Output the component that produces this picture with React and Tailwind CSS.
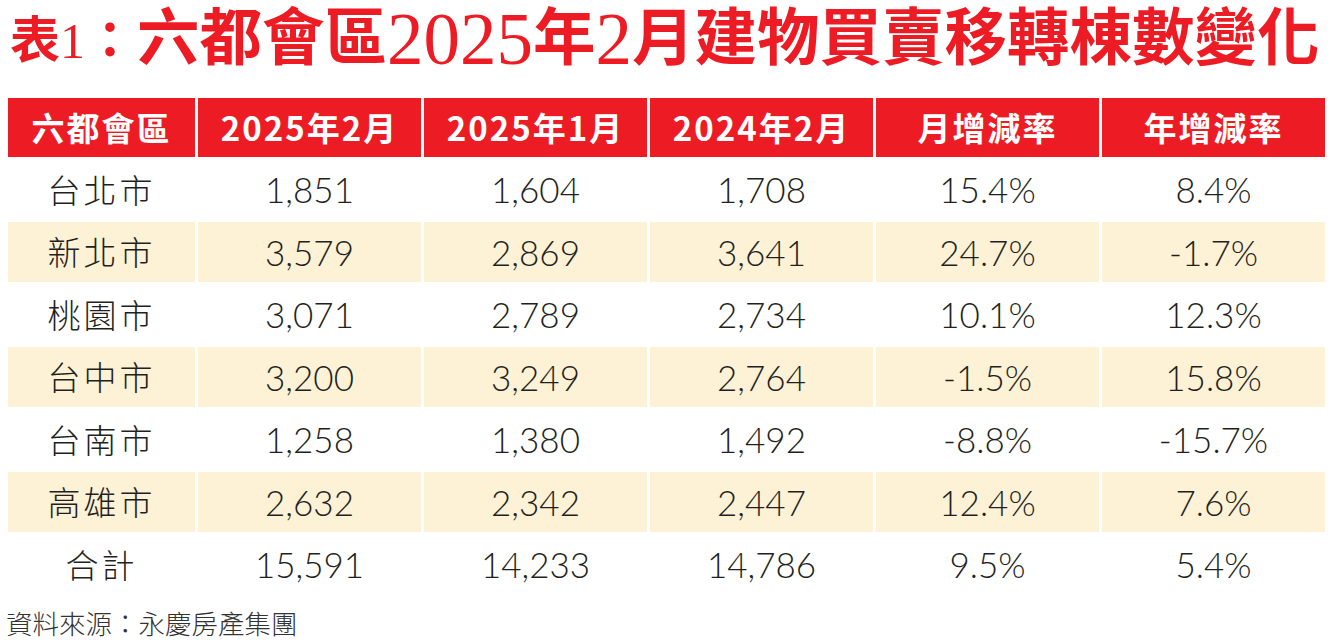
import React from "react";

const headers = ["六都會區", "2025年2月", "2025年1月", "2024年2月", "月增減率", "年增減率"];

const rows = [
  ["台北市", "1,851", "1,604", "1,708", "15.4%", "8.4%"],
  ["新北市", "3,579", "2,869", "3,641", "24.7%", "-1.7%"],
  ["桃園市", "3,071", "2,789", "2,734", "10.1%", "12.3%"],
  ["台中市", "3,200", "3,249", "2,764", "-1.5%", "15.8%"],
  ["台南市", "1,258", "1,380", "1,492", "-8.8%", "-15.7%"],
  ["高雄市", "2,632", "2,342", "2,447", "12.4%", "7.6%"],
  ["合計", "15,591", "14,233", "14,786", "9.5%", "5.4%"],
];

const Title = () => (
  <h1 className="h-[98px] pl-[10px] pb-[20px] flex items-center text-[#ed1c24] font-bold font-['Liberation_Serif','Noto_Sans_CJK_TC',serif] whitespace-nowrap leading-none">
    <span className="text-[50px] mt-[4px]">表<span className="font-normal">1</span>：</span>
    <span className="text-[62.5px] ml-[2px]">六都會區</span>
    <span className="text-[73px] font-normal">2025</span>
    <span className="text-[62.5px]">年</span>
    <span className="text-[73px] font-normal">2</span>
    <span className="text-[62.5px]">月建物買賣移轉棟數變化</span>
  </h1>
);

export default function App() {
  return (
    <div className="w-[1332px] h-[642px] bg-white overflow-hidden">
      <Title />
      <div className="mx-[8px] grid grid-cols-[187px_repeat(5,223px)] gap-x-[3px] gap-y-[2.5px]">
        {headers.map((h) => (
          <div
            key={h}
            className="h-[59px] bg-[#ed1c24] text-white flex items-center justify-center text-[33px] font-bold tracking-[2px] font-['Noto_Sans_CJK_TC',sans-serif]"
          >
            {h}
          </div>
        ))}
        {rows.map((r, i) => {
          const bg = i % 2 === 1 ? "bg-[#fdf1d6]" : "bg-white";
          return r.map((c, j) => (
            <div
              key={i + "-" + j}
              className={`${bg} h-[60px] flex items-center justify-center text-[#231f20] ${
                j === 0
                  ? "text-[33px] tracking-[3px] font-['Noto_Sans_CJK_TC',sans-serif] font-light"
                  : "text-[35px] font-['Lato','Noto_Sans_CJK_TC',sans-serif] font-light"
              }`}
            >
              {c}
            </div>
          ));
        })}
      </div>
      <p className="mt-[15px] pl-[6px] text-[26.5px] leading-none text-[#333] font-light font-['Noto_Sans_CJK_TC',sans-serif]">
        資料來源：永慶房產集團
      </p>
    </div>
  );
}
